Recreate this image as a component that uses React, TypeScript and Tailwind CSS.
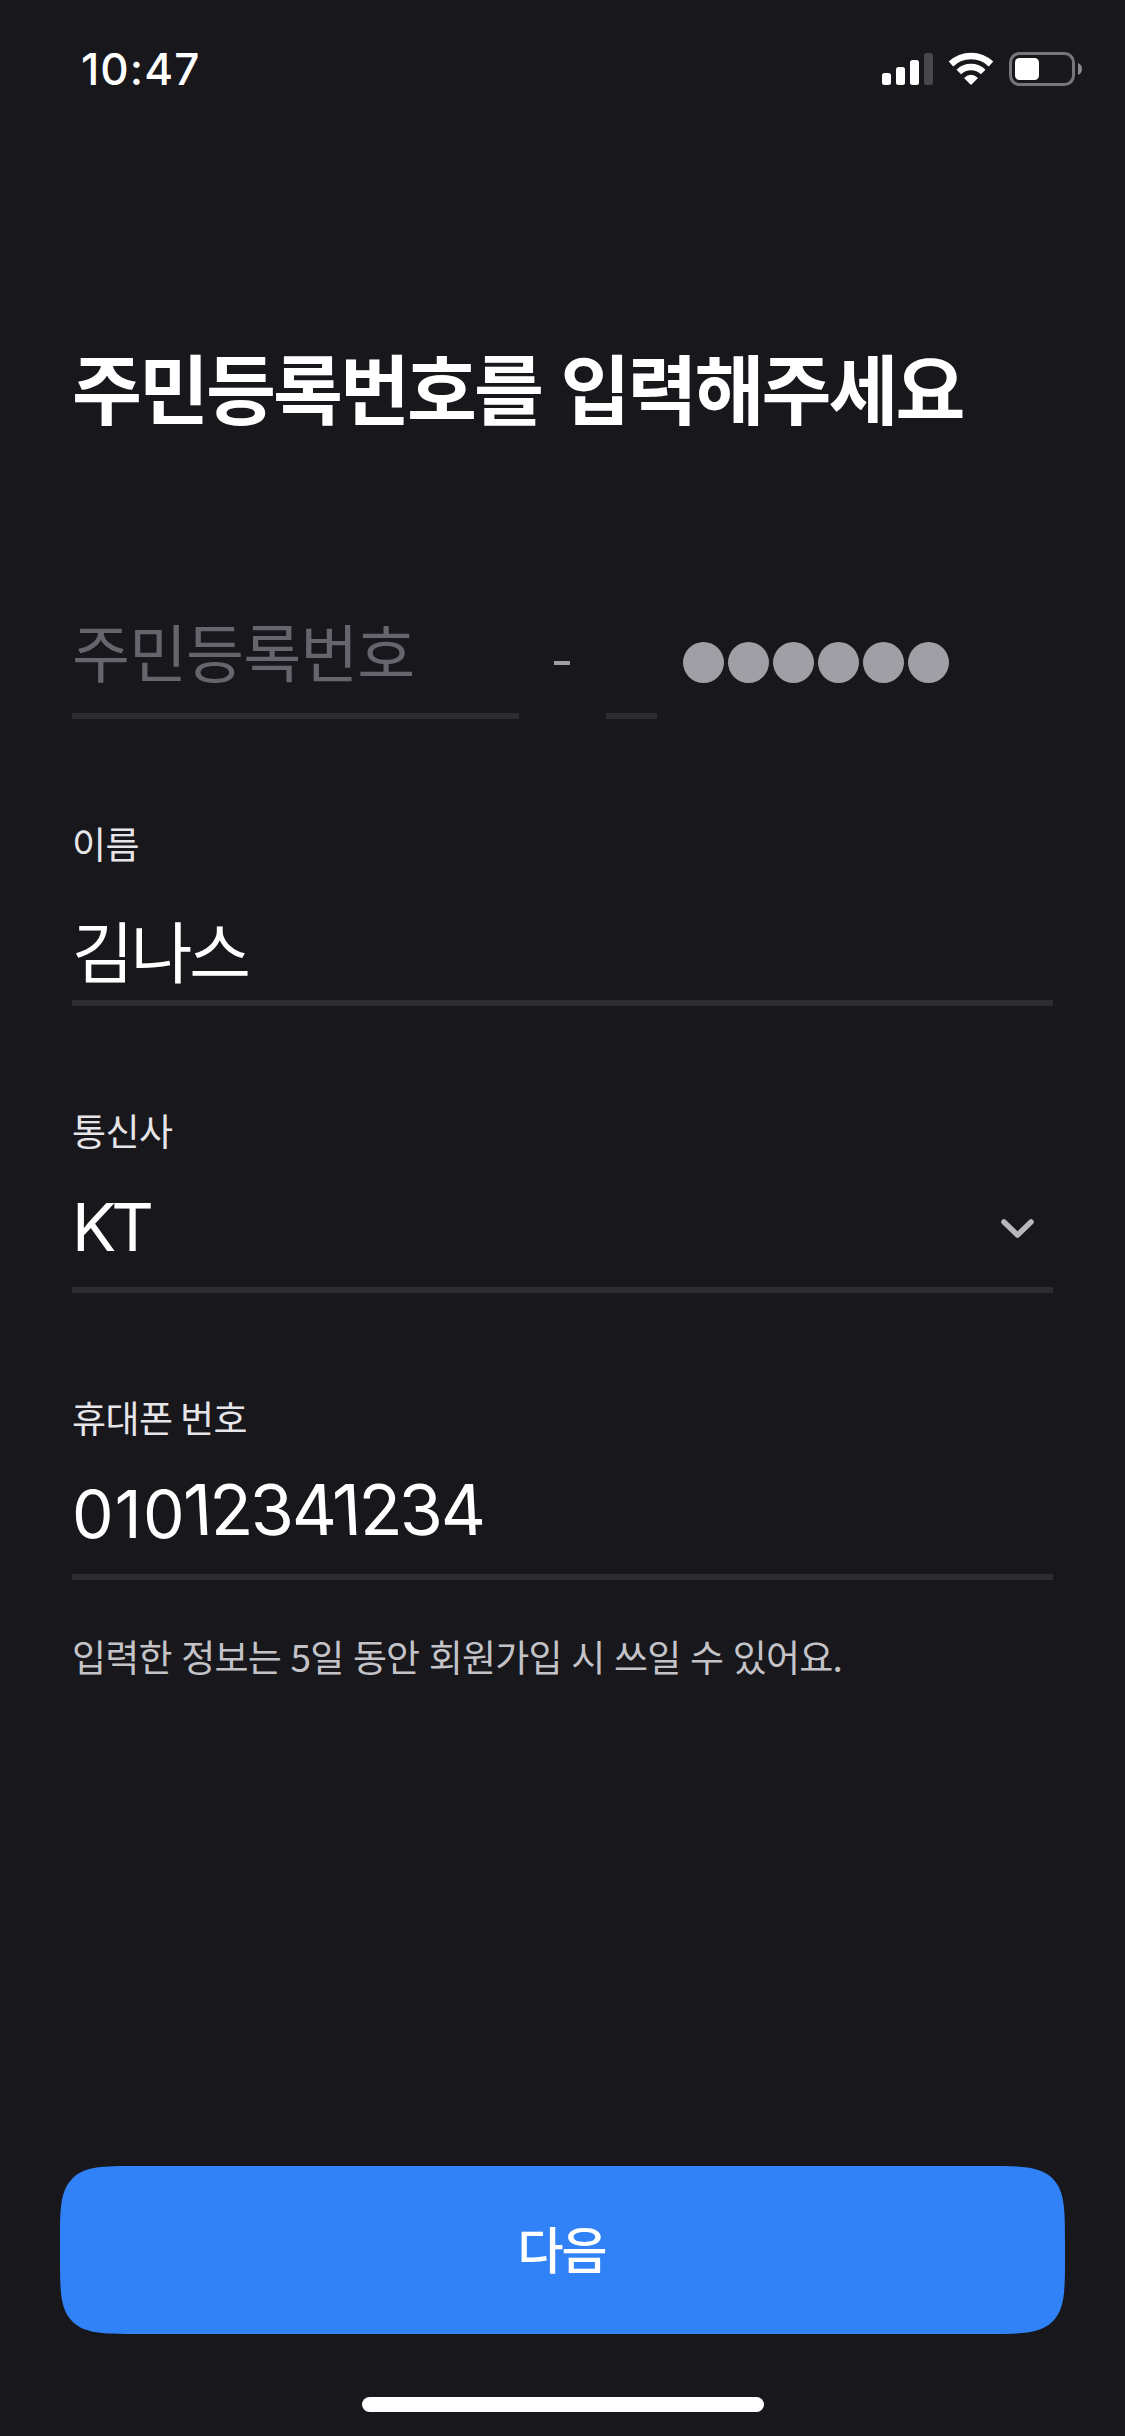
import type { ReactNode } from "react";

const KR = "font-['Noto_Sans_CJK_KR',sans-serif]";
const LATIN = "font-['Inter','Noto_Sans_CJK_KR',sans-serif]";

function StatusBar() {
  return (
    <header className="flex h-[138px] items-start justify-between pl-[81px] pr-[41px] pt-[39px]">
      <time className={`${LATIN} text-[44px] leading-[60px] font-[550] tracking-[1.1px]`}>10:47</time>
      <svg width="202" height="36" viewBox="0 0 202 36" className="mt-[12px]" aria-hidden="true">
        <g fill="#fff">
          <rect x="0" y="22" width="9" height="12" rx="2.5" />
          <rect x="14" y="16" width="9" height="18" rx="2.5" />
          <rect x="28" y="9" width="9" height="25" rx="2.5" />
          <rect x="42" y="2" width="9" height="32" rx="2.5" fill="#48484b" />
        </g>
        <g fill="none" stroke="#fff">
          <path d="M69 13 A29 29 0 0 1 109 13" strokeWidth="6.6" />
          <path d="M76.800 21 A17.500 17.500 0 0 1 101.200 21" strokeWidth="6.6" />
        </g>
        <path d="M82 27 Q89 20.500 96 27 L89.800 33.300 Q89 34 88.200 33.300 Z" fill="#fff" />
        <rect x="128.500" y="2.500" width="63" height="31" rx="9" fill="none" stroke="#77777a" strokeWidth="3" />
        <rect x="133" y="7" width="24" height="22" rx="4.5" fill="#fff" />
        <path d="M196 12 Q200 13.500 200 18 Q200 22.500 196 24 Z" fill="#89898c" />
      </svg>
    </header>
  );
}

function ResidentNumber() {
  return (
    <div className="mt-[169px] flex h-[114px] items-stretch">
      <div className={`${KR} w-[447px] border-b-[6px] border-[#2c2c33] text-[63px] leading-[90px] tracking-[-0.9px] text-[#66656e]`}>
        주민등록번호
      </div>
      <div className="ml-[35px] mt-[56px] h-[4px] w-[16px] bg-[#a09fa6]" />
      <div className="ml-[36px] w-[51px] border-b-[6px] border-[#2c2c33]" />
      <div className="ml-[26px] mt-[37px] flex gap-[4px]">
        {[0, 1, 2, 3, 4, 5].map((i) => (
          <span key={i} className="size-[41px] rounded-full bg-[#a09fa6]" />
        ))}
      </div>
    </div>
  );
}

function Field({ label, children }: { label: string; children: ReactNode }) {
  return (
    <div className="flex h-[287px] flex-col border-b-[6px] border-[#2c2c33] pt-[99px]">
      <div className={`${KR} text-[37px] leading-[50px] tracking-[-0.6px] text-[#e6e5ea]`}>{label}</div>
      {children}
    </div>
  );
}

export default function App() {
  return (
    <main className="flex h-[2436px] w-[1125px] flex-col overflow-hidden bg-[#17171c] text-white">
      <StatusBar />
      <section className="flex flex-col px-[72px]">
        <h1 className={`${KR} mt-[198px] text-[76px] leading-[100px] font-bold tracking-[-2.9px] [word-spacing:5px] whitespace-nowrap`}>
          주민등록번호를 입력해주세요
        </h1>
        <ResidentNumber />
        <Field label="이름">
          <div className={`${KR} mt-[36px] text-[67px] leading-[90px] tracking-[-3px]`}>김나스</div>
        </Field>
        <Field label="통신사">
          <div className="mt-[27px] flex h-[90px] items-center justify-between pr-[16px]">
            <span className={`${LATIN} text-[66px] leading-[90px] tracking-[-5px]`}>KT</span>
            <svg width="39" height="26" viewBox="0 0 39 26" fill="none" className="mt-[3px]" aria-hidden="true">
              <path d="M6 6 L19.500 19 L33 6" stroke="#b7b8be" strokeWidth="5.5" strokeLinecap="round" strokeLinejoin="round" />
            </svg>
          </div>
        </Field>
        <Field label="휴대폰 번호">
          <div className={`${LATIN} mt-[26px] flex h-[90px] items-baseline leading-[90px]`}>
            <span className="text-[66px] tracking-[1.2px]">010</span>
            <span className="origin-bottom -translate-y-[3px] skew-x-[3deg] text-[70px] tracking-[-2.3px]">12341234</span>
          </div>
        </Field>
        <p className={`${KR} mt-[50px] text-[37px] leading-[52px] tracking-[-0.8px] [word-spacing:2px] whitespace-nowrap text-[#c3c3c8]`}>
          입력한 정보는 5일 동안 회원가입 시 쓰일 수 있어요.
        </p>
      </section>
      <footer className="mt-auto flex flex-col items-center pb-[24px]">
        <button
          className={`${KR} h-[168px] w-[1005px] rounded-[56px] bg-[#3182f6] pr-[2px] pb-[6px] text-[50px] leading-[60px] font-medium tracking-[-2px] [corner-shape:squircle] supports-[corner-shape:squircle]:rounded-[78px]`}
        >
          다음
        </button>
        <div className="mt-[63px] h-[15px] w-[402px] rounded-full bg-white" />
      </footer>
    </main>
  );
}
